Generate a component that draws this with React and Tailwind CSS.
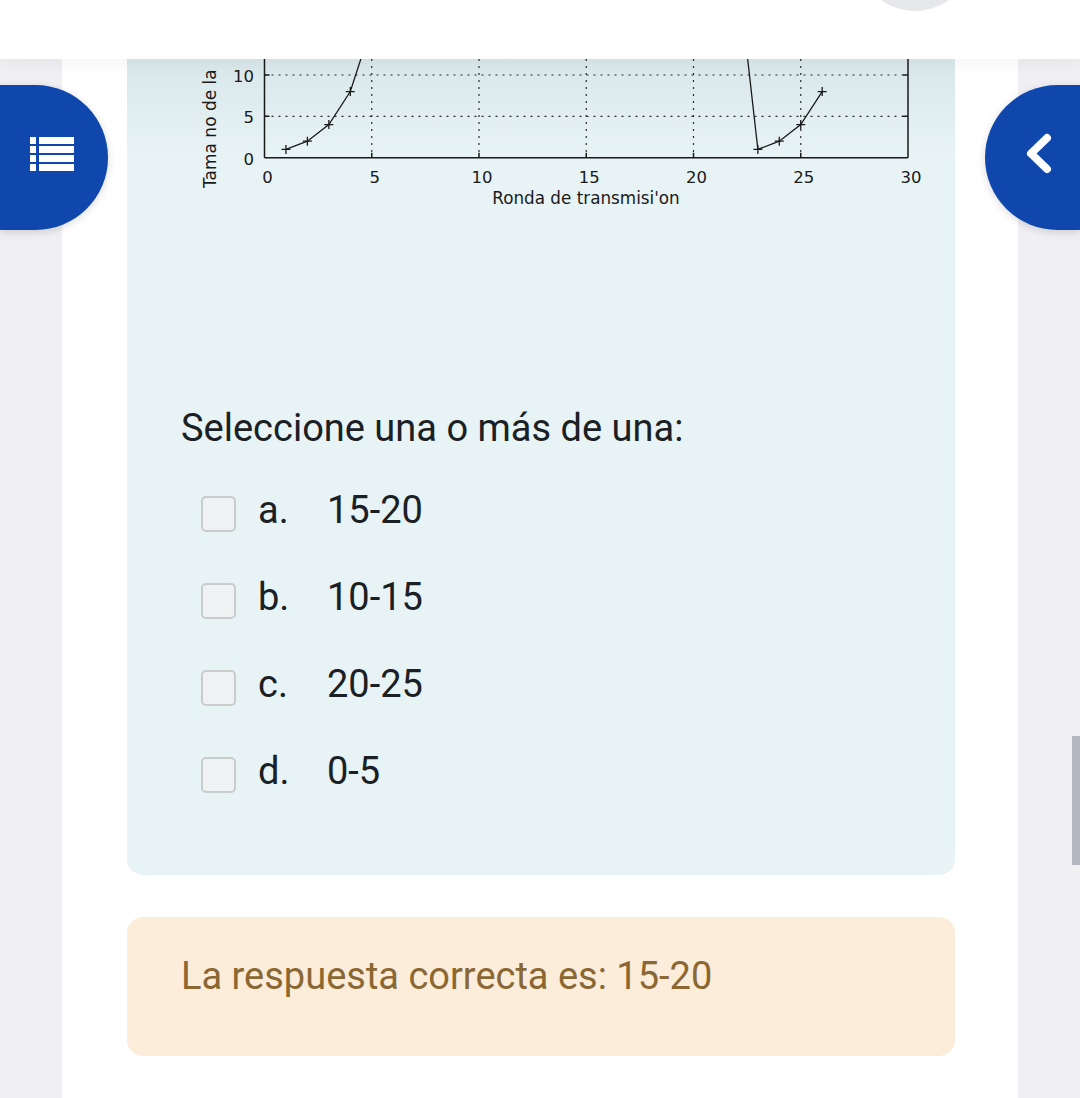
import React from "react";

const roboto = { fontFamily: "Roboto, 'Noto Sans', sans-serif" };

// chart scale (page coordinates)
const X = (v) => 264.5 + 21.45 * v;
const Y = (v) => 157.7 - 8.27 * v;

const leftCurve = [[1, 1], [2, 2], [3, 4], [4, 8], [5, 16]];
const rightCurve = [[22, 24], [23, 1], [24, 2], [25, 4], [26, 8]];
const marksLeft = [[1, 1], [2, 2], [3, 4], [4, 8]];
const marksRight = [[23, 1], [24, 2], [25, 4], [26, 8]];

function Plus({ x, y }) {
  return (
    <g stroke="#1a1a1a" strokeWidth="1.3">
      <line x1={x - 4.5} y1={y} x2={x + 4.5} y2={y} />
      <line x1={x} y1={y - 4.5} x2={x} y2={y + 4.5} />
    </g>
  );
}

function Chart() {
  const fam = "'DejaVu Sans', sans-serif";
  const xs = [0, 5, 10, 15, 20, 25, 30];
  return (
    <svg width="828" height="160" viewBox="127 59 828 160" className="block">
      <defs>
        <linearGradient id="shade" x1="0" y1="0" x2="0" y2="1">
          <stop offset="0" stopColor="#dae7ea" />
          <stop offset="0.6" stopColor="#e7f3f5" />
        </linearGradient>
      </defs>
      <rect x="127" y="59" width="828" height="160" fill="url(#shade)" />
      {/* grid */}
      <g stroke="#2a2a2a" strokeWidth="1.2" strokeDasharray="2 5">
        <line x1={X(0)} y1={Y(10)} x2={X(30)} y2={Y(10)} />
        <line x1={X(0)} y1={Y(5)} x2={X(30)} y2={Y(5)} />
        {[5, 10, 15, 20, 25].map((v) => (
          <line key={v} x1={X(v)} y1="59" x2={X(v)} y2={Y(0)} />
        ))}
      </g>
      {/* axes + ticks */}
      <g stroke="#1a1a1a" strokeWidth="1.5" fill="none">
        <line x1={X(0)} y1="59" x2={X(0)} y2={Y(0)} />
        <line x1={X(30)} y1="59" x2={X(30)} y2={Y(0)} />
        <line x1={X(0)} y1={Y(0)} x2={X(30)} y2={Y(0)} />
        {[5, 10, 15, 20, 25].map((v) => (
          <line key={v} x1={X(v)} y1={Y(0)} x2={X(v)} y2={Y(0) - 5} />
        ))}
        {[5, 10].map((v) => (
          <g key={v}>
            <line x1={X(0)} y1={Y(v)} x2={X(0) + 5} y2={Y(v)} />
            <line x1={X(30)} y1={Y(v)} x2={X(30) - 5} y2={Y(v)} />
          </g>
        ))}
      </g>
      {/* data */}
      <polyline points={leftCurve.map(([a, b]) => `${X(a)},${Y(b)}`).join(" ")} fill="none" stroke="#1a1a1a" strokeWidth="1.3" />
      <polyline points={rightCurve.map(([a, b]) => `${X(a)},${Y(b)}`).join(" ")} fill="none" stroke="#1a1a1a" strokeWidth="1.3" />
      {[...marksLeft, ...marksRight].map(([a, b], i) => (
        <Plus key={i} x={X(a)} y={Y(b)} />
      ))}
      {/* labels */}
      <g fill="#1a1a1a" fontFamily={fam} fontSize="16.5">
        {xs.map((v) => (
          <text key={v} x={X(v) + 3} y="183" textAnchor="middle">{v}</text>
        ))}
        <text x="254" y={Y(10) + 7} textAnchor="end">10</text>
        <text x="254" y={Y(5) + 7} textAnchor="end">5</text>
        <text x="254" y={Y(0) + 7} textAnchor="end">0</text>
        <text x="586" y="204" textAnchor="middle" fontSize="16.8">Ronda de transmisi'on</text>
        <text x="216" y="188" fontSize="17" transform="rotate(-90 216 188)">Tama no de la</text>
      </g>
    </svg>
  );
}

function Option({ letter, value }) {
  return (
    <div className="flex items-start h-[46px]">
      <span className="mt-[9px] ml-[20px] w-[35px] h-[36px] rounded-[5px] border-2 border-[#c9cccd] bg-[#eef2f3]" />
      <span className="ml-[22px] w-[69px] text-[38px] leading-[46px] text-[#1a2024]">{letter}</span>
      <span className="text-[38px] leading-[46px] text-[#1a2024]">{value}</span>
    </div>
  );
}

export default function App() {
  return (
    <div className="relative w-[1080px] h-[1098px] overflow-hidden bg-white" style={roboto}>
      {/* header */}
      <header className="relative z-10 h-[59px] bg-white shadow-[0_2px_18px_rgba(0,0,0,0.06)]">
        <div className="absolute left-[857px] top-[-105px] w-[116px] h-[116px] rounded-full bg-[#e6e8ec]" />
      </header>

      <div className="flex h-[1039px]">
        <aside className="w-[62px] bg-[#efeff4]" />

        <main className="flex-1 bg-white pl-[65px] pr-[63px]">
          {/* question card */}
          <section className="h-[816px] overflow-hidden rounded-b-[16px] bg-[#e7f3f5]">
            <Chart />
            <div className="pl-[54px]">
              <p className="mt-[186px] text-[38px] leading-[46px] text-[#1a2024]">
                Seleccione una o más de una:
              </p>
              <div className="mt-[36px] flex flex-col gap-[41px]">
                <Option letter="a." value="15-20" />
                <Option letter="b." value="10-15" />
                <Option letter="c." value="20-25" />
                <Option letter="d." value="0-5" />
              </div>
            </div>
          </section>

          {/* feedback */}
          <section className="mt-[42px] rounded-[16px] bg-[#fcedda] pl-[54px] pt-[36px] pb-[57px]">
            <p className="text-[38px] leading-[46px] text-[#8a6733]">La respuesta correcta es: 15-20</p>
          </section>
        </main>

        <aside className="w-[62px] bg-[#efeff4]" />
      </div>

      {/* floating nav buttons */}
      <button className="absolute left-0 top-[85px] z-20 flex h-[145px] w-[108px] items-center justify-center rounded-r-full bg-[#0f47ad] shadow-[0_2px_8px_rgba(0,0,0,0.15)]">
        <svg width="44" height="34" viewBox="0 0 44 34" fill="#fff" className="-ml-[5px] -mt-[8px]">
          {[0, 9, 18, 27].map((y) => (
            <g key={y}>
              <rect x="0" y={y} width="6" height="7" />
              <rect x="9" y={y} width="35" height="7" />
            </g>
          ))}
        </svg>
      </button>
      <button className="absolute right-0 top-[85px] z-20 h-[145px] w-[95px] rounded-l-full bg-[#0f47ad] shadow-[0_2px_8px_rgba(0,0,0,0.15)]">
        <svg width="95" height="145" viewBox="985 85 95 145" className="block">
          <path d="M1047 138 L1031 153.5 L1047 169" fill="none" stroke="#fff" strokeWidth="8" strokeLinecap="round" strokeLinejoin="round" />
        </svg>
      </button>

      {/* scrollbar */}
      <div className="absolute right-0 top-[736px] h-[129px] w-[8px] bg-[#b5b8c1]" />
    </div>
  );
}
